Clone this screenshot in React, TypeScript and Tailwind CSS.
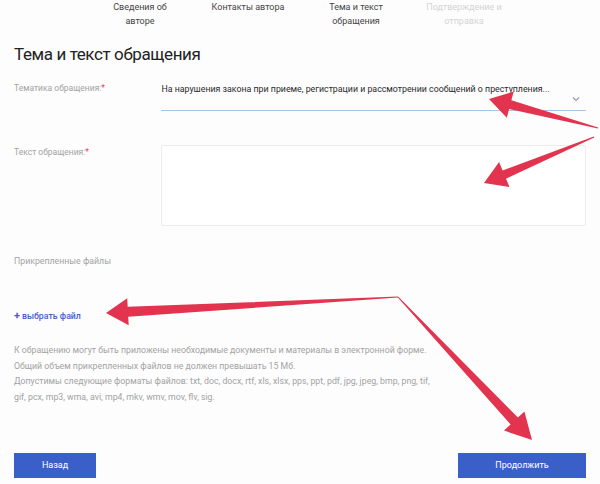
import React from "react";

type Pt = [number, number];

function arrowPoints(tail: Pt, tip: Pt, wt: number, ws: number, hl: number, hw: number): string {
  const [x0, y0] = tail;
  const [x1, y1] = tip;
  const dx = x1 - x0;
  const dy = y1 - y0;
  const len = Math.hypot(dx, dy);
  const ux = dx / len;
  const uy = dy / len;
  const nx = -uy;
  const ny = ux;
  const bx = x1 - ux * hl;
  const by = y1 - uy * hl;
  const pts: Pt[] = [
    [x0 + (nx * wt) / 2, y0 + (ny * wt) / 2],
    [bx + (nx * ws) / 2, by + (ny * ws) / 2],
    [bx + (nx * hw) / 2, by + (ny * hw) / 2],
    [x1, y1],
    [bx - (nx * hw) / 2, by - (ny * hw) / 2],
    [bx - (nx * ws) / 2, by - (ny * ws) / 2],
    [x0 - (nx * wt) / 2, y0 - (ny * wt) / 2],
  ];
  return pts.map((p) => `${p[0].toFixed(1)},${p[1].toFixed(1)}`).join(" ");
}

function Arrows() {
  const c = "#e2344e";
  return (
    <svg className="pointer-events-none absolute left-0 top-0" width={600} height={484} viewBox="0 0 600 484">
      <polygon points={arrowPoints([598, 128], [489, 99], 1, 9, 22, 27)} fill={c} />
      <polygon points={arrowPoints([594, 137], [484, 183], 1, 9, 22, 27)} fill={c} />
      <polygon points={arrowPoints([398, 297], [106, 313], 1, 10, 22, 27)} fill={c} />
      <polygon points={arrowPoints([398, 297], [532, 440], 1, 10, 26, 28)} fill={c} />
    </svg>
  );
}

export default function App() {
  return (
    <div className="relative h-[484px] w-[600px] overflow-hidden bg-[#fdfdfd]" style={{ fontFamily: "Roboto, 'Noto Sans', sans-serif" }}>
      {/* stepper */}
      <div className="flex pl-[86px] pt-0 text-[9px] leading-[14px] text-[#444]">
        <div className="w-[108px] text-center">Сведения об<br />авторе</div>
        <div className="w-[108px] text-center">Контакты автора</div>
        <div className="w-[108px] text-center">Тема и текст<br />обращения</div>
        <div className="w-[108px] text-center text-[#d4d4d4]">Подтверждение и<br />отправка</div>
      </div>

      <div className="px-[14px]">
        <h1 className="mt-[16px] text-[17px] leading-[20px] tracking-[-0.4px] text-[#222]">Тема и текст обращения</h1>

        {/* topic */}
        <div className="mt-[17px] flex">
          <div className="w-[149px] text-[8.5px] leading-[14px] text-[#a3a3a3]">
            Тематика обращения:<span className="text-[#e8485f]">*</span>
          </div>
          <div className="relative h-[30px] w-[429px] border-b border-[#a9c3e6]">
            <div className="whitespace-nowrap pt-[1px] text-[8.8px] leading-[14px] text-[#2a2a2a]">
              На нарушения закона при приеме, регистрации и рассмотрении сообщений о преступления...
            </div>
            <svg className="absolute right-[6px] top-[15px]" width="8" height="6" viewBox="0 0 8 6">
              <path d="M1 1.5 L4 4.5 L7 1.5" fill="none" stroke="#8f9bb0" strokeWidth="1.1" />
            </svg>
          </div>
        </div>

        {/* text */}
        <div className="mt-[34px] flex">
          <div className="w-[149px] text-[8.5px] leading-[14px] text-[#a3a3a3]">
            Текст обращения:<span className="text-[#e8485f]">*</span>
          </div>
          <div className="h-[81px] w-[429px] rounded-[2px] border border-[#ececec] bg-white" />
        </div>

        <div className="mt-[28px] text-[8.75px] leading-[14px] text-[#a3a3a3]">Прикрепленные файлы</div>

        <div className="mt-[41px] flex items-center gap-[2px] text-[8.75px] font-medium leading-[14px] text-[#4560c9]">
          <span className="text-[11px] font-bold leading-[14px]">+</span>
          <span>выбрать файл</span>
        </div>

        <div className="mt-[20px] text-[8.75px] leading-[15.5px] text-[#a3a3a3]">
          <div>К обращению могут быть приложены необходимые документы и материалы в электронной форме.</div>
          <div>Общий объем прикрепленных файлов не должен превышать 15 Мб.</div>
          <div>Допустимы следующие форматы файлов: txt, doc, docx, rtf, xls, xlsx, pps, ppt, pdf, jpg, jpeg, bmp, png, tif,</div>
          <div>gif, pcx, mp3, wma, avi, mp4, mkv, wmv, mov, flv, sig.</div>
        </div>

        <div className="mt-[48px] flex justify-between pr-[0px]">
          <button className="h-[25px] w-[82px] bg-[#3b5fc9] text-[9px] text-white">Назад</button>
          <button className="mr-[0px] h-[25px] w-[128px] bg-[#3b5fc9] text-[9px] text-white">Продолжить</button>
        </div>
      </div>

      <Arrows />
    </div>
  );
}
